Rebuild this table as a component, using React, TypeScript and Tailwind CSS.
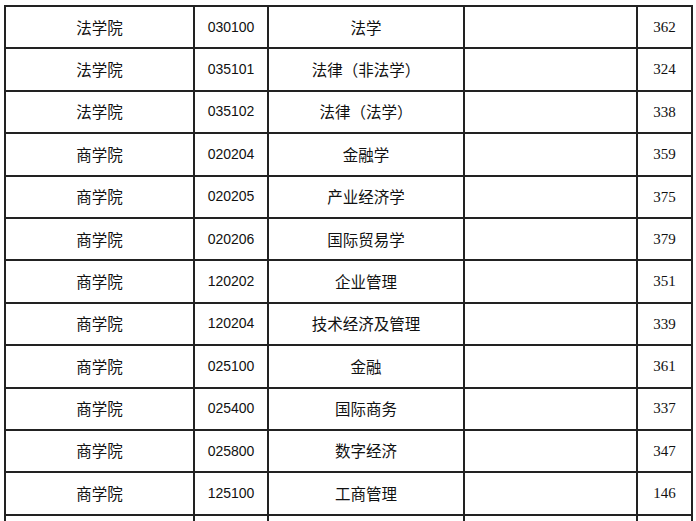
import React from 'react';

const rows: [string, string, string, string][] = [
  ['法学院', '030100', '法学', '362'],
  ['法学院', '035101', '法律（非法学）', '324'],
  ['法学院', '035102', '法律（法学）', '338'],
  ['商学院', '020204', '金融学', '359'],
  ['商学院', '020205', '产业经济学', '375'],
  ['商学院', '020206', '国际贸易学', '379'],
  ['商学院', '120202', '企业管理', '351'],
  ['商学院', '120204', '技术经济及管理', '339'],
  ['商学院', '025100', '金融', '361'],
  ['商学院', '025400', '国际商务', '337'],
  ['商学院', '025800', '数字经济', '347'],
  ['商学院', '125100', '工商管理', '146'],
];

const cell = 'border-2 border-[#222] text-center align-middle p-0';

export default function App() {
  return (
    <div className="w-[696px] h-[521px] overflow-hidden bg-white pl-[4px] pt-[5px]">
      <table className="border-collapse table-fixed w-[687px] text-[#111]">
        <colgroup>
          <col className="w-[189px]" />
          <col className="w-[74px]" />
          <col className="w-[196px]" />
          <col className="w-[173px]" />
          <col className="w-[55px]" />
        </colgroup>
        <tbody>
          {rows.map(([school, code, major, score]) => (
            <tr key={code} className="h-[42.4px]">
              <td className={`${cell} font-['Noto_Sans_CJK_SC',sans-serif] text-[15.5px]`}>{school}</td>
              <td className={`${cell} font-['Liberation_Sans',sans-serif] text-[14px]`}>{code}</td>
              <td className={`${cell} font-['Noto_Sans_CJK_SC',sans-serif] text-[15.5px]`}>{major}</td>
              <td className={cell}></td>
              <td className={`${cell} font-['Liberation_Serif',serif] text-[15px]`}>{score}</td>
            </tr>
          ))}
          <tr className="h-[42.4px]">
            <td className={cell}></td>
            <td className={cell}></td>
            <td className={cell}></td>
            <td className={cell}></td>
            <td className={cell}></td>
          </tr>
        </tbody>
      </table>
    </div>
  );
}
